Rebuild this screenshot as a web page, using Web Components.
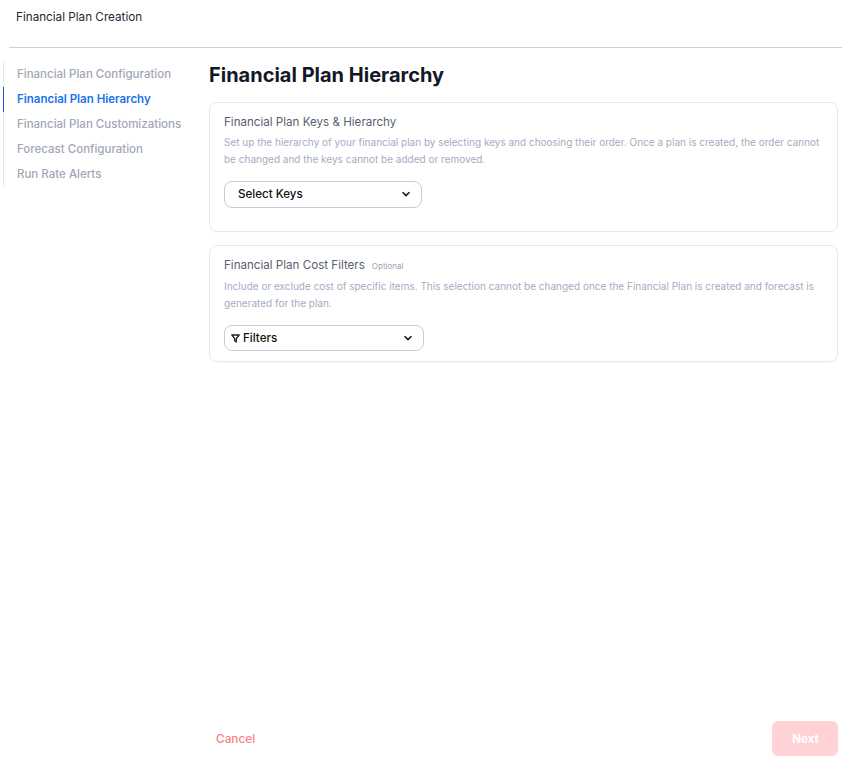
<!doctype html>
<html>
<head>
<meta charset=utf-8>
<title>Financial Plan Creation</title>
<style>
  html,body {margin:0;height:100%;background:#fff}
  body {font-family:Inter,"Liberation Sans",sans-serif}
</style>
</head>
<body>

<template id=plan-page-template>
  <style>
    :host {display:flex;flex-direction:column;height:758px;box-sizing:border-box;font-family:Inter,"Liberation Sans",sans-serif}
    .top {height:48px;box-sizing:border-box;margin-left:9px;padding:10px 0 0 7px;border-bottom:1px solid #d0d0d0;font-size:11.7px;line-height:14px;color:#1f2937}
    .body {flex:1;display:flex;padding-top:13px;min-height:0}
    .side {width:209px;flex:none;padding:1px 0 0 3px;box-sizing:border-box}
    .main {flex:1;min-width:0;padding-right:4px;display:flex;flex-direction:column}
    h1 {margin:0;font-size:20px;line-height:28px;font-weight:700;color:#111827}
    .cards {display:flex;flex-direction:column;gap:13px;margin-top:13px;flex:1}
    .foot {display:flex;justify-content:space-between;align-items:center;padding-bottom:2px}
    .cancel {font-size:11.8px;font-weight:500;color:#fb7f85;padding-left:7px}
    .next {width:66px;height:35px;border-radius:6px;background:#ffd3d5;color:#fff;font-size:11.6px;font-weight:700;display:flex;align-items:center;justify-content:center;padding-left:1px;box-sizing:border-box}
  </style>
  <div class=top><slot name=title></slot></div>
  <div class=body>
    <div class=side><slot name=side></slot></div>
    <div class=main>
      <h1><slot name=heading></slot></h1>
      <div class=cards><slot></slot></div>
      <div class=foot><span class=cancel>Cancel</span><span class=next>Next</span></div>
    </div>
  </div>
</template>

<template id=step-nav-template>
  <style>
    :host {display:block;border-left:1px solid #e5e7eb;width:fit-content;min-width:180px}
    ::slotted(step-item) {display:block}
  </style>
  <slot></slot>
</template>

<template id=step-item-template>
  <style>
    :host {display:block;height:25px;margin-left:-1px;padding-left:13px;border-left:1px solid transparent;font-size:11.5px;line-height:25px;font-weight:500;color:#a0a7b4;white-space:nowrap}
    :host([active]) {color:#1a73e8;border-left-color:#1d4ed8;font-weight:600}
  </style>
  <slot></slot>
</template>

<template id=plan-card-template>
  <style>
    :host {display:block;box-sizing:border-box;border:1px solid #e8e8ea;border-radius:8px;padding:11px 14px 0;box-shadow:0 1px 1px rgba(0,0,0,.02)}
    .head {display:flex;align-items:baseline;gap:7px;height:17px;font-size:11.6px;line-height:17px;color:#566070}
    .opt {font-size:8px;color:#9ca3af}
    .desc {margin-top:var(--desc-gap,3px);font-size:10px;line-height:17px;color:#a3adbf}
    .ctl {margin-top:13px}
  </style>
  <div class=head><span><slot name=head></slot></span><span class=opt><slot name=opt></slot></span></div>
  <div class=desc><slot name=desc></slot></div>
  <div class=ctl><slot></slot></div>
</template>

<template id=drop-down-template>
  <style>
    :host {display:flex;align-items:center;box-sizing:border-box;height:27px;border:1px solid #c9ced6;border-radius:8px;font-size:11.6px;font-weight:500;color:#111;background:#fff}
    .lbl {flex:1;display:flex;align-items:center;gap:3px}
    svg {display:block;flex:none}
    .chev {margin-right:9px}
  </style>
  <span class=lbl><slot name=icon></slot><slot></slot></span>
  <svg class=chev width=12 height=12 viewBox="0 0 12 12" fill=none stroke=#222 stroke-width=1.5 stroke-linecap=round stroke-linejoin=round><path d="M3 4.6 6 7.6 9 4.6"/></svg>
</template>

<script>
  function simple(name,tpl){
    customElements.define(name,class extends HTMLElement{
      constructor(){
        super();
        var shadow  = this.attachShadow({mode:"open"});
        shadow.appendChild(document.getElementById(tpl).content.cloneNode(true));
      }
    });
  }//simple
  simple('plan-page','plan-page-template');
  simple('step-nav','step-nav-template');
  simple('step-item','step-item-template');
  simple('plan-card','plan-card-template');
  simple('drop-down','drop-down-template');
</script>

<plan-page>
  <span slot=title>Financial Plan Creation</span>
  <step-nav slot=side>
    <step-item>Financial Plan Configuration</step-item>
    <step-item active>Financial Plan Hierarchy</step-item>
    <step-item>Financial Plan Customizations</step-item>
    <step-item>Forecast Configuration</step-item>
    <step-item>Run Rate Alerts</step-item>
  </step-nav>
  <span slot=heading>Financial Plan Hierarchy</span>

  <plan-card style="height:130px">
    <span slot=head>Financial Plan Keys &amp; Hierarchy</span>
    <span slot=desc>Set up the hierarchy of your financial plan by selecting keys and choosing their order. Once a plan is created, the order cannot be changed and the keys cannot be added or removed.</span>
    <drop-down style="width:198px;padding:0 0 1px 13px">Select Keys</drop-down>
  </plan-card>

  <plan-card style="height:117px;--desc-gap:4px">
    <span slot=head>Financial Plan Cost Filters</span>
    <span slot=opt>Optional</span>
    <span slot=desc>Include or exclude cost of specific items. This selection cannot be changed once the Financial Plan is created and forecast is generated for the plan.</span>
    <drop-down style="width:200px;padding-left:6px;height:26px">
      <svg slot=icon width=9 height=9 viewBox="0 0 9 9" fill=none stroke=#222 stroke-width=1.3 stroke-linejoin=round><path d="M.8 1h7.4L5.3 4.6V8L3.7 7V4.6Z"/></svg>
      Filters
    </drop-down>
  </plan-card>
</plan-page>

</body>
</html>
